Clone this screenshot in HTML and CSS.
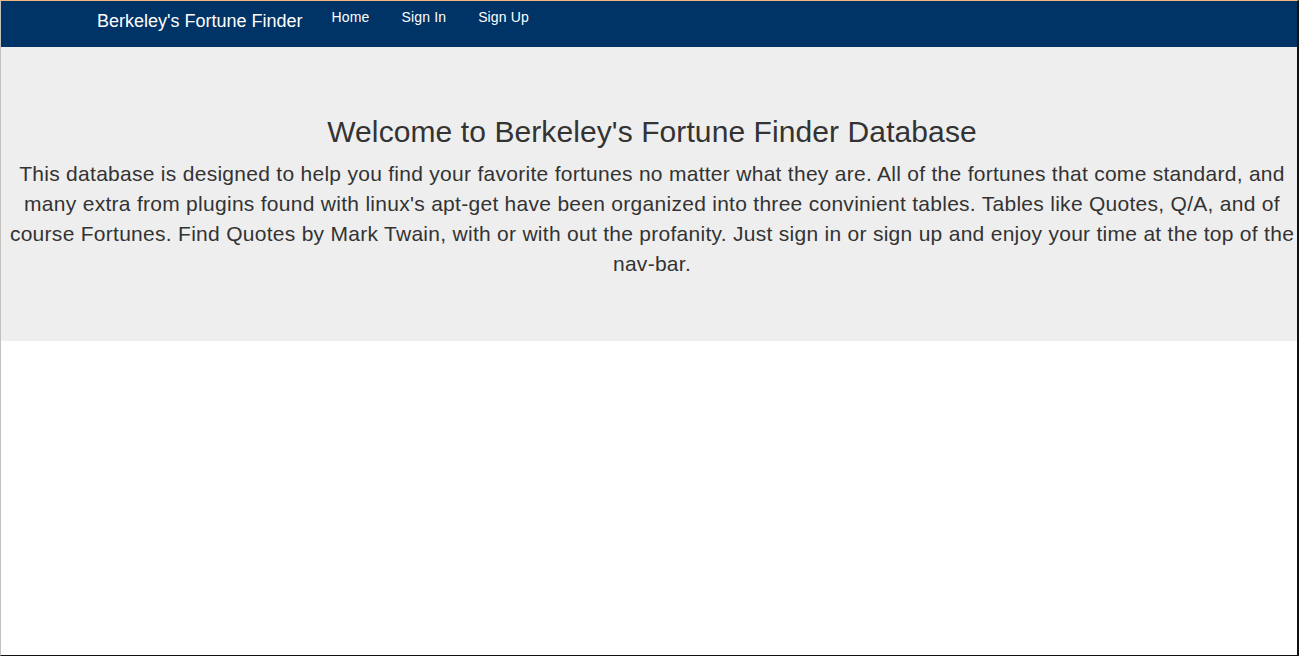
FILE: index.html
```html
<!DOCTYPE html>
<html lang="en">
<head>
<meta charset="utf-8">
<title>Berkeley's Fortune Finder</title>
<link rel="stylesheet" href="styles.css">
</head>
<body>
<nav class="navbar">
  <a class="brand" href="#">Berkeley's Fortune Finder</a>
  <ul class="nav-links">
    <li><a href="#">Home</a></li>
    <li><a href="#">Sign In</a></li>
    <li><a href="#">Sign Up</a></li>
  </ul>
</nav>
<section class="jumbotron">
  <h1 class="title">Welcome to Berkeley's Fortune Finder Database</h1>
  <p class="lead">This database is designed to help you find your favorite fortunes no matter what they are. All of the fortunes that come standard, and many extra from plugins found with linux's apt-get have been organized into three convinient tables. Tables like Quotes, Q/A, and of course Fortunes. Find Quotes by Mark Twain, with or with out the profanity. Just sign in or sign up and enjoy your time at the top of the nav-bar.</p>
</section>
</body>
</html>
```
FILE: styles.css
```css
* { box-sizing: border-box; }
html, body { margin: 0; padding: 0; }
body {
  width: 1299px;
  height: 656px;
  background: #fff;
  border-top: 1px solid #f3b57c;
  border-left: 1px solid #c4c1bc;
  border-right: 2px solid #111;
  border-bottom: 1px solid #111;
  font-family: "Liberation Sans", Arial, sans-serif;
  color: #333;
  overflow: hidden;
}
.navbar {
  display: flex;
  align-items: flex-start;
  height: 46px;
  background: #003366;
  padding-left: 81px;
}
.brand {
  display: block;
  padding: 10px 14px 0 15px;
  font-size: 18px;
  line-height: 20px;
  color: #fff;
  text-decoration: none;
}
.nav-links {
  display: flex;
  list-style: none;
  margin: 0;
  padding: 0;
}
.nav-links a {
  display: block;
  padding: 6px 17px 0 15px;
  font-size: 14px;
  line-height: 20px;
  letter-spacing: 0.15px;
  color: #fff;
  text-decoration: none;
}
.jumbotron {
  background: #eee;
  padding: 68px 1px 62px 7px;
  text-align: center;
}
.title {
  margin: 0 0 11px;
  font-size: 30px;
  font-weight: 400;
  line-height: 33px;
  letter-spacing: 0.09px;
}
.lead {
  margin: 0;
  font-size: 21px;
  line-height: 30px;
  letter-spacing: 0.28px;
}
```
